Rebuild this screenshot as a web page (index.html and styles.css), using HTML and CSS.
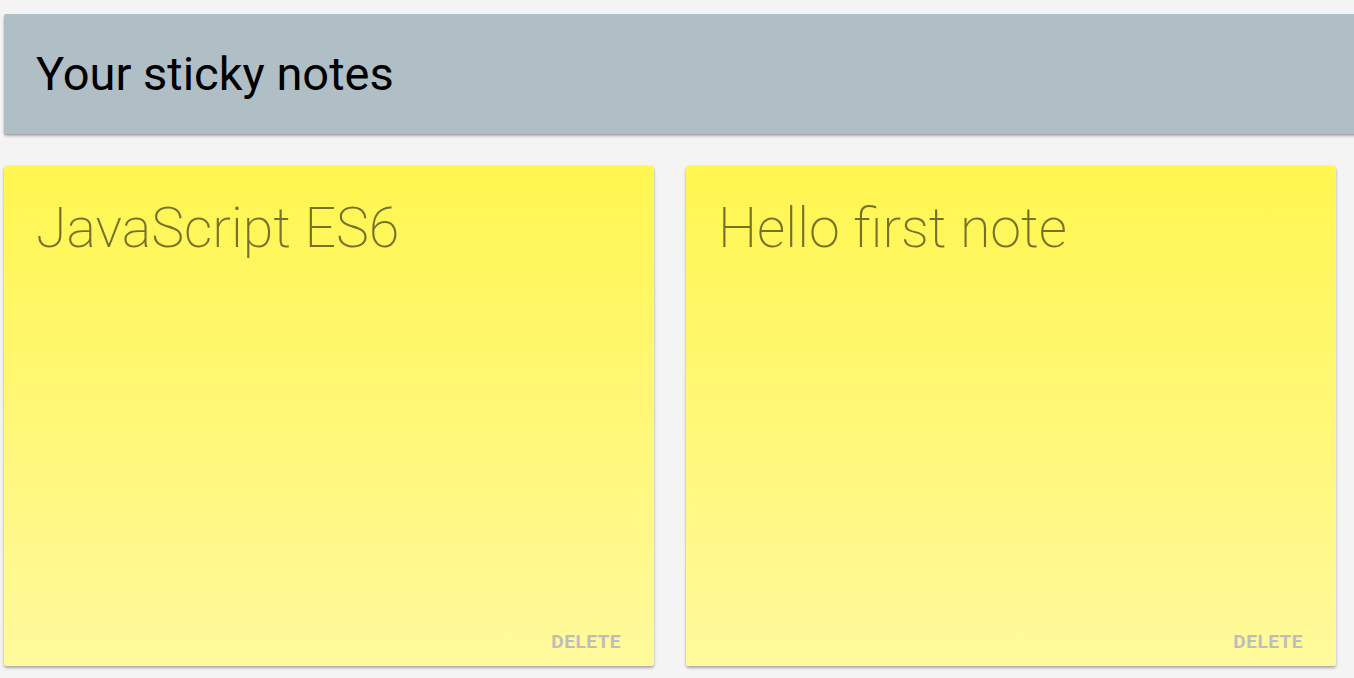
FILE: index.html
```html
<!DOCTYPE html>
<html>
<head>
<meta charset="utf-8">
<link rel="stylesheet" href="styles.css">
</head>
<body>
<header class="appbar">
  <h1 class="appbar-title">Your sticky notes</h1>
</header>
<main class="notes">
  <section class="note">
    <h2 class="note-title">JavaScript ES6</h2>
    <div class="note-actions"><button class="note-delete">DELETE</button></div>
  </section>
  <section class="note">
    <h2 class="note-title">Hello first note</h2>
    <div class="note-actions"><button class="note-delete">DELETE</button></div>
  </section>
</main>
</body>
</html>
```
FILE: styles.css
```css
html, body {
  margin: 0;
  padding: 0;
}
body {
  background: #f4f4f4;
  font-family: Roboto, "Liberation Sans", sans-serif;
  width: 1354px;
  height: 678px;
  overflow: hidden;
  padding: 14px 0 0 4px;
  box-sizing: border-box;
}
.appbar {
  width: 1380px;
  height: 120px;
  background: #b0bec5;
  border-radius: 2px;
  box-shadow: 0 2px 3px rgba(0,0,0,0.28), 0 1px 1px rgba(0,0,0,0.12);
  display: flex;
  align-items: center;
  padding-left: 32px;
  box-sizing: border-box;
}
.appbar-title {
  margin: 0;
  font-size: 47px;
  font-weight: 400;
  color: #000;
  line-height: 1;
  margin-top: -1px;
}
.notes {
  display: flex;
  gap: 32px;
  margin-top: 32px;
}
.note {
  width: 650px;
  height: 500px;
  box-sizing: border-box;
  border-radius: 3px;
  background: linear-gradient(to bottom, #fff650 0%, #fff99c 100%);
  box-shadow: 0 2px 3px rgba(0,0,0,0.3), 0 0 2px rgba(0,0,0,0.08);
  display: flex;
  flex-direction: column;
  padding: 30px 32px 0 32px;
}
.note-title {
  margin: 0;
  font-size: 55.5px;
  font-weight: 200;
  color: rgba(0,0,0,0.54);
  line-height: 1.2;
}
.note-actions {
  margin-top: auto;
  display: flex;
  justify-content: flex-end;
  padding-bottom: 13px;
}
.note-delete {
  border: 0;
  background: transparent;
  font-family: Roboto, "Liberation Sans", sans-serif;
  font-weight: 700;
  font-size: 19px;
  color: #bdbdbd;
  padding: 0;
  margin-right: 1px;
  letter-spacing: 0.5px;
  line-height: 22px;
}
```
